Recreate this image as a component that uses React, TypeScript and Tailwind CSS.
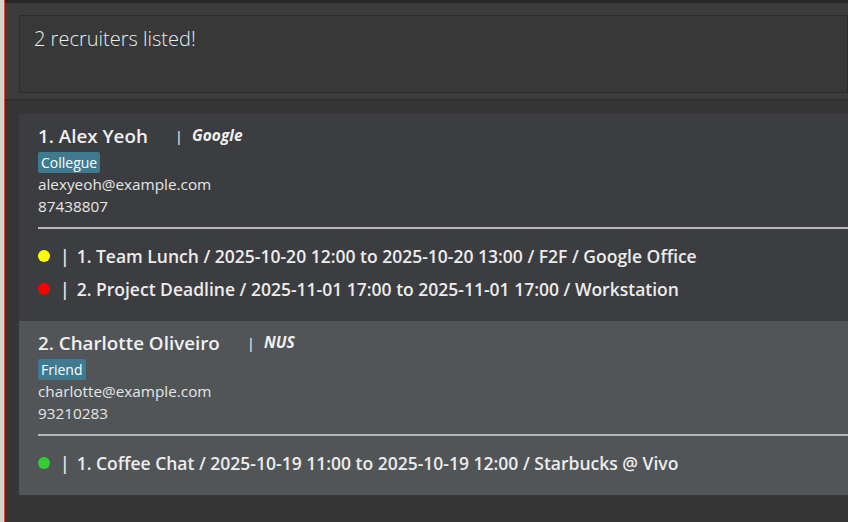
import React from "react";

const font = { fontFamily: '"Open Sans", "Noto Sans", sans-serif' };

type Ev = { color: string; text: string };
type R = { idx: number; name: string; org: string; tag: string; email: string; phone: string; events: Ev[]; bg: string };

const data: R[] = [
  {
    idx: 1,
    name: "Alex Yeoh",
    org: "Google",
    tag: "Collegue",
    email: "alexyeoh@example.com",
    phone: "87438807",
    bg: "bg-[#3c3d40]",
    events: [
      { color: "bg-[#ffff00]", text: "1. Team Lunch / 2025-10-20 12:00 to 2025-10-20 13:00 / F2F / Google Office" },
      { color: "bg-[#ff0000]", text: "2. Project Deadline / 2025-11-01 17:00 to 2025-11-01 17:00 / Workstation" },
    ],
  },
  {
    idx: 2,
    name: "Charlotte Oliveiro",
    org: "NUS",
    tag: "Friend",
    email: "charlotte@example.com",
    phone: "93210283",
    bg: "bg-[#515558]",
    events: [{ color: "bg-[#32cd32]", text: "1. Coffee Chat / 2025-10-19 11:00 to 2025-10-19 12:00 / Starbucks @ Vivo" }],
  },
];

function Card({ r }: { r: R }) {
  return (
    <div className={`${r.bg} pl-[19px] pt-[8px] pb-[21px] flex flex-col`}>
      <div className="flex items-center h-[28px]">
        <span className="text-[18.8px] font-semibold text-[#f0f0f0] leading-none">
          {r.idx}. {r.name}
        </span>
        <span className="ml-[27px] text-[15px] font-semibold text-[#d8d8d8] leading-none">|</span>
        <span className="ml-[9px] text-[15.5px] font-bold italic text-[#f0f0f0] leading-none">{r.org}</span>
      </div>
      <div className="flex mt-[2px]">
        <span className="bg-[#3e7b91] text-white text-[14px] leading-[21px] px-[3px] rounded-[2px]">{r.tag}</span>
      </div>
      <div className="text-[15.3px] text-[#e6e6e6] leading-[22px]">{r.email}</div>
      <div className="text-[15.3px] text-[#e6e6e6] leading-[22px]">{r.phone}</div>
      <div className="h-[2px] bg-[#b8b8b8] mt-[10px]" />
      <div className="flex flex-col gap-[11px] mt-[16px]">
        {r.events.map((e, i) => (
          <div key={i} className="flex items-center h-[22px]">
            <span className={`w-[12px] h-[12px] rounded-full ${e.color}`} />
            <span className="ml-[10px] text-[17.5px] text-[#e6e6e6] font-semibold">|</span>
            <span className="ml-[7px] text-[17.5px] text-[#ececec] font-semibold whitespace-nowrap">{e.text}</span>
          </div>
        ))}
      </div>
    </div>
  );
}

export default function App() {
  return (
    <div className="w-[848px] h-[522px] overflow-hidden flex" style={font}>
      <div className="w-[4px] bg-[#d3d3d3]" />
      <div className="w-[1px] bg-[#e2462a]" />
      <div className="flex-1 flex flex-col bg-[#3c3c3c] min-w-0">
        <div className="h-[3px] bg-[#25272b]" />
        <div className="pt-[12px] pl-[14px] pb-[6px]">
          <div className="h-[78px] border border-[#2d2d2d] bg-[#383838] pl-[14px] pt-[8px]">
            <span className="text-[20px] font-light text-[#e8eef4]">2 recruiters listed!</span>
          </div>
        </div>
        <div className="h-[2px] bg-[#2e2e2e]" />
        <div className="flex-1 bg-[#363636] pt-[13px] pl-[14px] flex flex-col">
          {data.map((r) => (
            <Card key={r.idx} r={r} />
          ))}
        </div>
      </div>
    </div>
  );
}
